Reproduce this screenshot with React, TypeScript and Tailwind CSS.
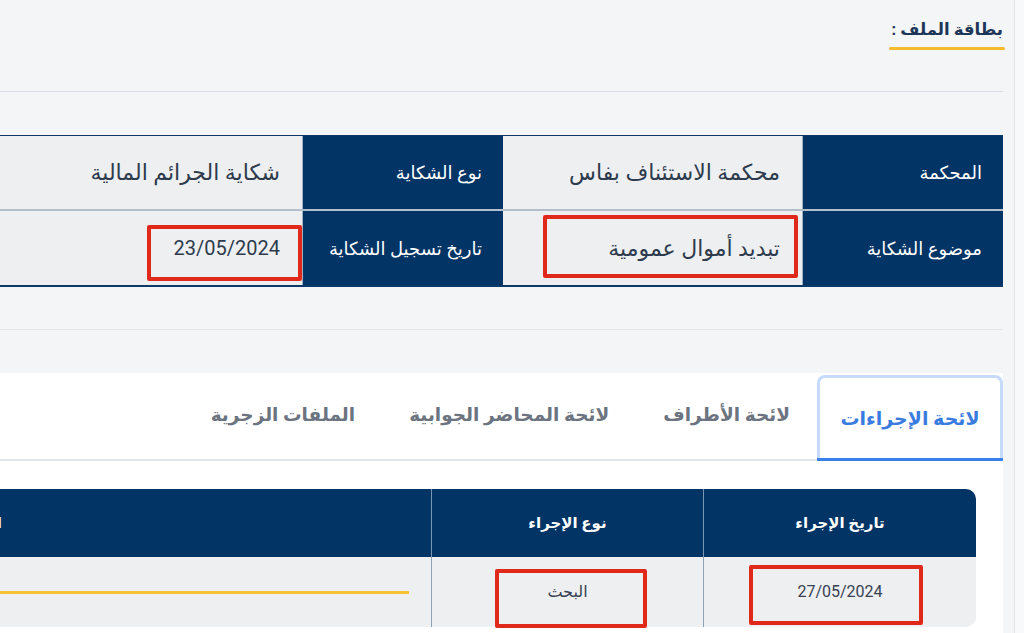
import React from "react";

const font = { fontFamily: "Roboto, 'DejaVu Sans', sans-serif" };

function RedBox({ className }: { className: string }) {
  return <div className={`absolute border-[4px] border-[#e1291b] rounded-[2px] pointer-events-none ${className}`} />;
}

export default function App() {
  return (
    <div dir="rtl" style={font} className="w-[1024px] h-[633px] overflow-hidden bg-[#f4f5f7] flex">
      <div className="w-[10px] shrink-0 bg-[#f8f9fa] border-l border-[#e4e7eb]" />
      <div className="flex-1 min-w-0 pr-[11px] flex flex-col">
        {/* title */}
        <div className="pt-[17px] flex">
          <div className="flex flex-col items-start">
            <div className="text-[16.5px] font-bold text-[#1d3557] leading-[26px]">بطاقة الملف :</div>
            <div className="mt-[4px] h-[3px] w-[116px] bg-[#f6ba2f] rounded-full -mr-[2px]" />
          </div>
        </div>
        <div className="mt-[41px] h-px bg-[#d9dee6]" />

        {/* info table */}
        <div className="mt-[43px] w-[1100px] self-start shrink-0 border-t border-[#0b3a6a] border-b-2 border-b-[#0b3a6a]">
          <div className="flex h-[75px] border-b-2 border-[#b4bfcc]">
            <div className="w-[200px] shrink-0 bg-[#023466] text-white text-[18px] flex items-center pr-[21px]">المحكمة</div>
            <div className="w-[300px] shrink-0 bg-[#eeeff1] border-r border-[#9fb0c2] text-[#2d3b4d] text-[22px] flex items-center pr-[22px]">محكمة الاستئناف بفاس</div>
            <div className="w-[200px] shrink-0 bg-[#023466] text-white text-[18px] flex items-center pr-[21px]">نوع الشكاية</div>
            <div className="flex-1 bg-[#eeeff1] border-r border-[#9fb0c2] text-[#2d3b4d] text-[22px] flex items-center pr-[22px]">شكاية الجرائم المالية</div>
          </div>
          <div className="flex h-[74px]">
            <div className="w-[200px] shrink-0 bg-[#023466] text-white text-[18px] flex items-center pr-[21px]">موضوع الشكاية</div>
            <div className="relative w-[300px] shrink-0 bg-[#eeeff1] border-r border-[#9fb0c2] text-[#2d3b4d] text-[22px] flex items-center pr-[22px]">
              تبديد أموال عمومية
              <RedBox className="right-[4px] top-[4px] w-[255px] h-[63px]" />
            </div>
            <div className="w-[200px] shrink-0 bg-[#023466] text-white text-[18px] flex items-center pr-[21px]">تاريخ تسجيل الشكاية</div>
            <div className="relative flex-1 bg-[#eeeff1] border-r border-[#9fb0c2] text-[#2d3b4d] text-[20px] flex items-center pr-[22px]">
              23/05/2024
              <RedBox className="right-0 top-[14px] w-[155px] h-[56px]" />
            </div>
          </div>
        </div>

        <div className="mt-[42px] h-px bg-[#e3e6eb]" />

        {/* tabs panel */}
        <div className="mt-[43px] bg-white flex-1 flex flex-col">
          <div className="flex items-end h-[88px]">
            <div className="w-[186px] shrink-0 h-[86px] border-[3px] border-[#c6dbfb] border-b-0 rounded-t-[8px] relative flex items-center justify-center">
              <span className="text-[19px] font-semibold text-[#3a7be0]">لائحة الإجراءات</span>
              <div className="absolute -bottom-[0px] -left-[3px] -right-[3px] h-[3px] bg-[#3a80ea]" />
            </div>
            <div className="flex-1 h-full flex items-center border-b-2 border-[#e2e5ea] text-[18.5px] font-semibold text-[#6b7480] whitespace-nowrap">
              <div className="px-[27px]">لائحة الأطراف</div>
              <div className="px-[27px]">لائحة المحاضر الجوابية</div>
              <div className="px-[27px]">الملفات الزجرية</div>
            </div>
          </div>

          <div className="mt-[28px] pr-[27px]">
            <div className="w-[1400px] self-start">
              <div className="flex h-[68px] bg-[#023466] rounded-tr-[10px] text-white text-[15px] font-bold">
                <div className="w-[272px] shrink-0 flex items-center justify-center">تاريخ الإجراء</div>
                <div className="w-[272px] shrink-0 border-r border-[#7d97b3] flex items-center justify-center">نوع الإجراء</div>
                <div className="flex-1 border-r border-[#7d97b3] flex items-center pr-[429px]">الإجراء</div>
              </div>
              <div className="flex h-[70px] bg-[#eeeff1] rounded-br-[10px] text-[16px] text-[#374151]">
                <div className="relative w-[272px] shrink-0 flex items-center justify-center">
                  27/05/2024
                  <RedBox className="right-[53px] top-[8px] w-[174px] h-[60px]" />
                </div>
                <div className="relative w-[272px] shrink-0 border-r border-[#8fa2b7] flex items-center justify-center">
                  البحث
                  <RedBox className="right-[56px] top-[12px] w-[152px] h-[59px]" />
                </div>
                <div className="flex-1 border-r border-[#8fa2b7] flex items-center pr-[22px]">
                  <div className="w-[1000px] shrink-0 h-[3px] bg-[#f8c232]" />
                </div>
              </div>
            </div>
          </div>
        </div>
      </div>
    </div>
  );
}
